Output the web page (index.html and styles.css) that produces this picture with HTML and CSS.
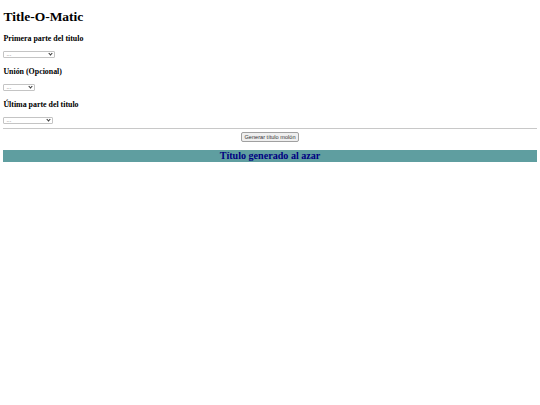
FILE: index.html
```html
<!DOCTYPE html>
<html lang="es">
<head>
<meta charset="utf-8">
<title>Title-O-Matic</title>
<link rel="stylesheet" href="styles.css">
</head>
<body class="page">
<h1 class="title">Title-O-Matic</h1>
<h3 class="label">Primera parte del titulo</h3>
<div class="pick-wrap pick-first"><select class="pick"><option>...</option></select></div>
<h3 class="label">Unión (Opcional)</h3>
<div class="pick-wrap pick-join"><select class="pick"><option>...</option></select></div>
<h3 class="label">Última parte del titulo</h3>
<div class="pick-wrap pick-last"><select class="pick"><option>...</option></select></div>
<hr class="rule">
<div class="actions"><button class="gen" type="button">Generar título molón</button></div>
<h2 class="result">Título generado al azar</h2>
</body>
</html>
```
FILE: styles.css
```css
html {
  background: #ffffff;
}
.page {
  margin: 3.4px;
  font-family: "Liberation Serif", "Times New Roman", serif;
  color: #000000;
}
.title {
  font-size: 13.5px;
  line-height: 15.5px;
  margin: 6px 0 9px;
  font-weight: bold;
}
.label {
  font-size: 7.9px;
  line-height: 9.1px;
  margin: 7.9px 0;
  font-weight: bold;
}
.pick-wrap {
  position: relative;
  height: 7px;
  padding-bottom: 1px;
}
.pick-first { width: 52px; }
.pick-join { width: 32px; }
.pick-last { width: 50px; }
.pick-wrap::after {
  content: "";
  position: absolute;
  right: 3.5px;
  top: 1.2px;
  width: 2px;
  height: 2px;
  border-right: 1px solid #333333;
  border-bottom: 1px solid #333333;
  transform: rotate(45deg);
  pointer-events: none;
}
.pick {
  -webkit-appearance: none;
  appearance: none;
  display: block;
  box-sizing: border-box;
  width: 100%;
  height: 7px;
  padding: 0 0 0 2px;
  margin: 0;
  font-family: "Liberation Sans", Arial, sans-serif;
  font-size: 6px;
  line-height: 5px;
  color: #666666;
  background: #ffffff;
  border: 1px solid #c4c4c4;
  border-radius: 1px;
  outline: none;
}
.rule {
  margin: 3.4px 0;
  border: none;
  border-top: 1px solid #c8c8c8;
  height: 0;
}
.actions {
  text-align: center;
  font-size: 10px;
  line-height: 10px;
  height: 10px;
}
.gen {
  box-sizing: border-box;
  height: 10px;
  width: 58px;
  padding: 0;
  margin: 0;
  font-family: "Liberation Sans", Arial, sans-serif;
  font-size: 5.6px;
  line-height: 8px;
  color: #333333;
  background: #efefef;
  border: 1px solid #a0a0a0;
  border-radius: 2px;
  vertical-align: top;
}
.result {
  margin: 7.6px 0;
  font-size: 10.1px;
  line-height: 11.6px;
  font-weight: bold;
  text-align: center;
  color: #000080;
  background: #5f9ea0;
}
```
